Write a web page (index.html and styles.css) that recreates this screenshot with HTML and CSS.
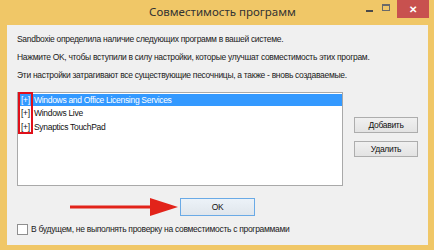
FILE: index.html
```html
<!DOCTYPE html>
<html lang="ru">
<head>
    <meta charset="UTF-8">
    <title>Совместимость программ</title>
    <link rel="stylesheet" href="styles.css">
</head>
<body>
    <div class="window">
        <div class="titlebar">
            <span></span>
            <div class="title">Совместимость программ</div>
            <div class="controls">
                <span class="ctl minimize"><i></i></span>
                <span class="ctl maximize"><i></i></span>
                <span class="ctl close">&#x2715;</span>
            </div>
        </div>

        <div class="client">
            <p class="info">Sandboxie определила наличие следующих программ в вашей системе.</p>
            <p class="info">Нажмите OK, чтобы вступили в силу настройки, которые улучшат совместимость этих програм.</p>
            <p class="info">Эти настройки затрагивают все существующие песочницы, а также - вновь создаваемые.</p>

            <div class="middle">
                <div class="listbox">
                    <div class="row selected"><span class="mark">[+]</span>Windows and Office Licensing Services</div>
                    <div class="row"><span class="mark">[+]</span>Windows Live</div>
                    <div class="row"><span class="mark">[+]</span>Synaptics TouchPad</div>
                    <div class="highlight"></div>
                </div>
                <div class="side-buttons">
                    <button class="btn">Добавить</button>
                    <button class="btn">Удалить</button>
                </div>
            </div>

            <div class="ok-row">
                <svg class="arrow" width="110" height="18" viewBox="0 0 110 18">
                    <line x1="0" y1="9" x2="82" y2="9" stroke="#e2231a" stroke-width="3"/>
                    <polygon points="80,0 108,9 80,18" fill="#e2231a"/>
                </svg>
                <button class="btn btn-default">OK</button>
            </div>

            <label class="check">
                <span class="box"></span>
                В будущем, не выполнять проверку на совместимость с программами
            </label>
        </div>
    </div>
</body>
</html>
```

FILE: styles.css
```css
* {
    margin: 0;
    padding: 0;
    box-sizing: border-box;
}

body {
    width: 434px;
    height: 250px;
    overflow: hidden;
    font-family: 'Liberation Sans', Arial, sans-serif;
}

.window {
    width: 434px;
    height: 250px;
    background: #f0c767;
    padding: 0 6px 5px 7px;
    display: flex;
    flex-direction: column;
}

.titlebar {
    height: 25px;
    display: grid;
    grid-template-columns: 1fr auto 1fr;
    align-items: start;
}

.title {
    font-family: 'Noto Sans', 'Liberation Sans', sans-serif;
    font-size: 11.5px;
    color: #333;
    line-height: 24px;
    padding-left: 10px;
}

.controls {
    display: flex;
    justify-content: flex-end;
    margin-right: -1px;
}

.ctl {
    display: flex;
    align-items: center;
    justify-content: center;
    height: 18px;
}

.minimize {
    width: 16px;
}

.minimize i {
    width: 7px;
    height: 2px;
    background: #4a4a4a;
    margin-top: 4px;
}

.maximize {
    width: 18px;
}

.maximize i {
    width: 8px;
    height: 7px;
    border: 1px solid #6a6a6a;
    border-top-width: 2px;
    margin-top: -3px;
}

.close {
    width: 32px;
    margin-left: 2px;
    background: #c8514f;
    color: #fff;
    font-size: 10px;
    font-weight: bold;
}

.client {
    flex: 1;
    background: #f0f0f0;
    padding: 5px 10px 0 10px;
    display: flex;
    flex-direction: column;
}

.info {
    font-size: 8.5px;
    letter-spacing: -0.3px;
    color: #1a1a1a;
    line-height: 18px;
    white-space: nowrap;
}

.middle {
    display: flex;
    margin-top: 8px;
}

.listbox {
    position: relative;
    width: 327px;
    height: 94px;
    background: #fff;
    border: 1px solid #a9a9a9;
    padding-top: 1px;
}

.row {
    font-size: 8.5px;
    letter-spacing: -0.3px;
    color: #111;
    height: 14px;
    line-height: 13px;
}

.mark {
    display: inline-block;
    width: 16px;
    padding-left: 3px;
}

.row.selected {
    background: #3399ff;
    color: #fff;
    height: 12px;
    line-height: 12px;
    margin-bottom: 1px;
}

.highlight {
    position: absolute;
    left: 0;
    top: -1px;
    width: 15px;
    height: 42px;
    border: 2px solid #e0101a;
}

.side-buttons {
    display: flex;
    flex-direction: column;
    gap: 8px;
    margin-left: 11px;
    padding-top: 25px;
}

.btn {
    width: 64px;
    height: 16px;
    font-family: 'Liberation Sans', Arial, sans-serif;
    font-size: 8.5px;
    letter-spacing: -0.3px;
    color: #111;
    background: linear-gradient(#f0f0f0, #e3e3e3);
    border: 1px solid #adadad;
}

.btn-default {
    width: 75px;
    height: 18px;
    border-color: #6aaae6;
    background: linear-gradient(#ecf2f8, #e0e6ec);
}

.ok-row {
    display: flex;
    align-items: center;
    margin-top: 12px;
    padding-left: 53px;
}

.check {
    display: flex;
    align-items: center;
    gap: 3px;
    margin-top: 7px;
    font-size: 8.5px;
    letter-spacing: -0.3px;
    color: #1a1a1a;
    line-height: 12px;
}

.box {
    width: 11px;
    height: 11px;
    border: 1px solid #8f8f8f;
    background: #fff;
}
```
